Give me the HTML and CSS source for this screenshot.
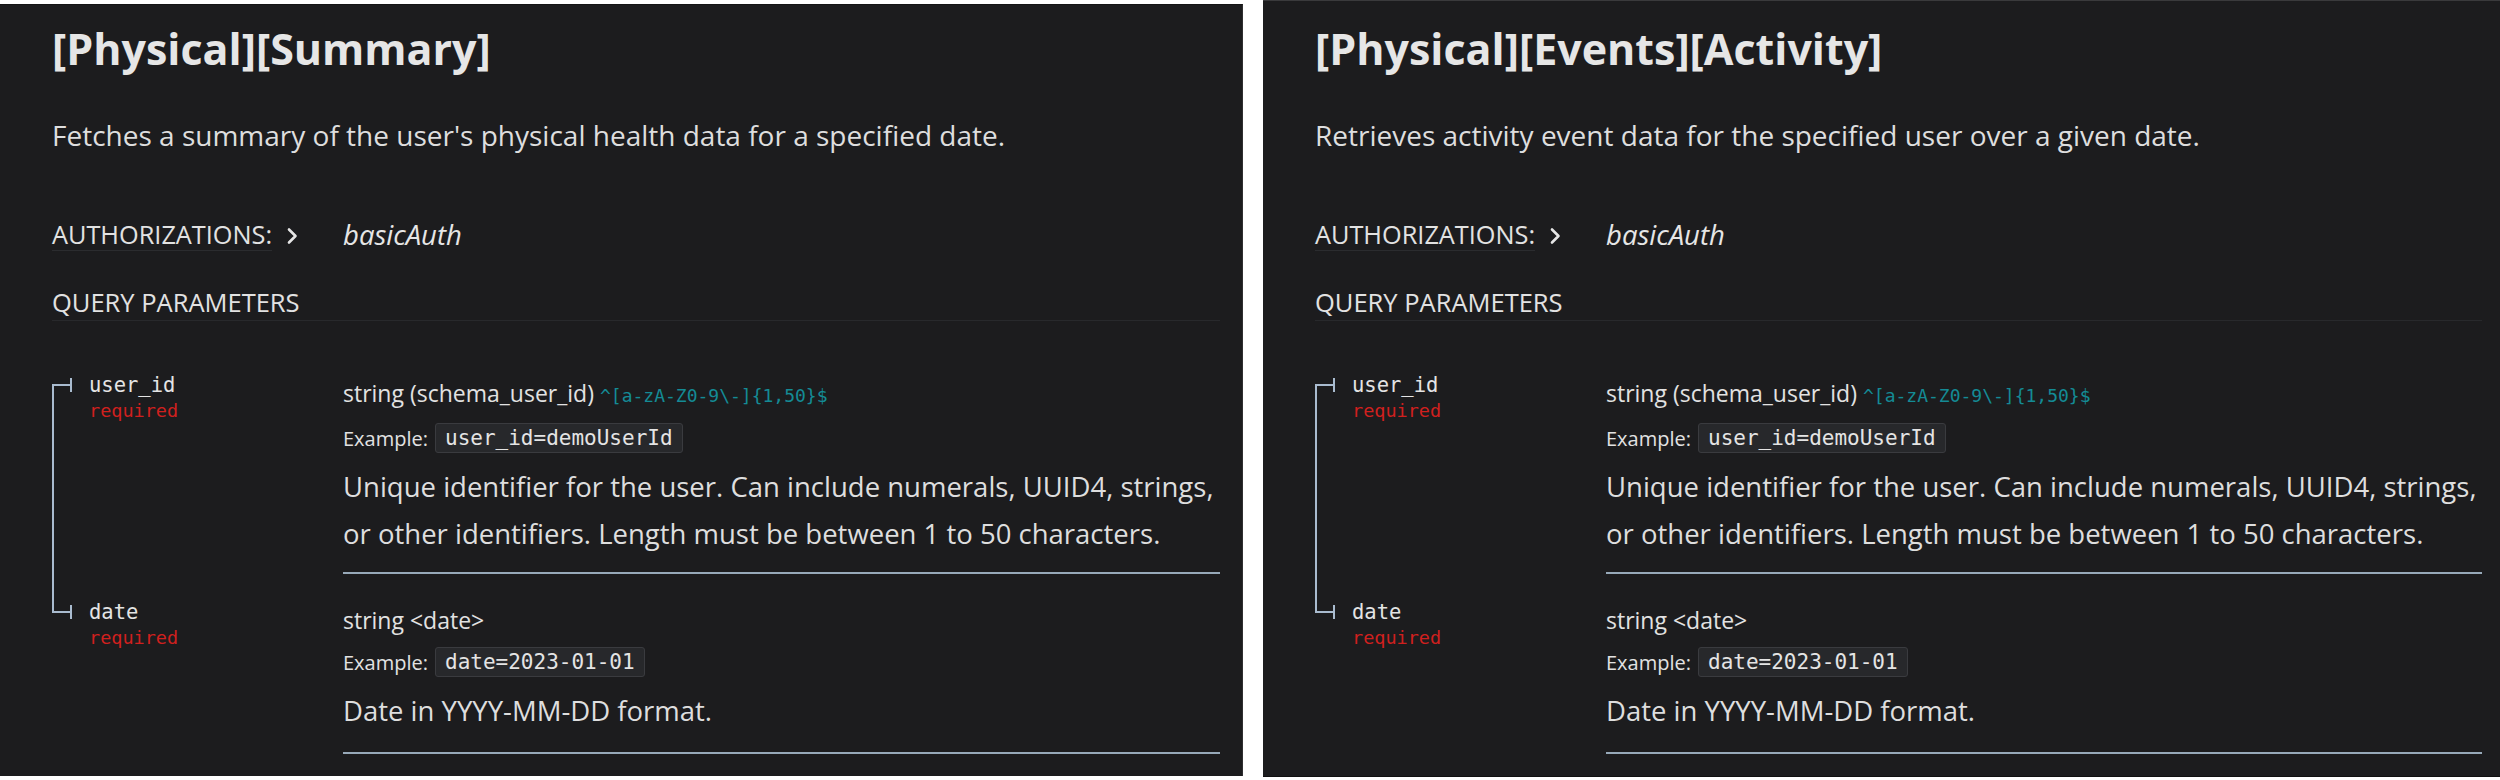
FILE: index.html
```html
<!DOCTYPE html>
<html>
<head>
<meta charset="utf-8">
<link rel="stylesheet" href="styles.css">
</head>
<body>
<div class="page">
  <section class="panel panel-left">
    <h2 class="title">[Physical][Summary]</h2>
    <p class="desc">Fetches a summary of the user's physical health data for a specified date.</p>
    <div class="auth">
      <div class="auth-label"><span class="auth-text">AUTHORIZATIONS:</span>
        <svg class="chev" viewBox="0 0 14 20" width="14" height="20"><path d="M4 3.5 L10.5 10 L4 16.5" fill="none" stroke="#e6e6e6" stroke-width="2.6" stroke-linecap="round" stroke-linejoin="round"/></svg>
      </div>
      <span class="auth-value">basicAuth</span>
    </div>
    <h5 class="qp">QUERY PARAMETERS</h5>
    <div class="params">
      <div class="pname first"><span class="branch"></span><div class="name">user_id</div><div class="req">required</div></div>
      <div class="pdetail">
        <div class="type">string (schema_user_id) <span class="pattern">^[a-zA-Z0-9\-]{1,50}$</span></div>
        <div class="example"><span>Example:</span><code class="code">user_id=demoUserId</code></div>
        <p class="pdesc">Unique identifier for the user. Can include numerals, UUID4, strings, or other identifiers. Length must be between 1 to 50 characters.</p>
      </div>
      <div class="pname last"><span class="branch"></span><div class="name">date</div><div class="req">required</div></div>
      <div class="pdetail pdetail-last">
        <div class="type">string &lt;date&gt;</div>
        <div class="example"><span>Example:</span><code class="code">date=2023-01-01</code></div>
        <p class="pdesc">Date in YYYY-MM-DD format.</p>
      </div>
    </div>
  </section>
  <section class="panel panel-right">
    <h2 class="title">[Physical][Events][Activity]</h2>
    <p class="desc">Retrieves activity event data for the specified user over a given date.</p>
    <div class="auth">
      <div class="auth-label"><span class="auth-text">AUTHORIZATIONS:</span>
        <svg class="chev" viewBox="0 0 14 20" width="14" height="20"><path d="M4 3.5 L10.5 10 L4 16.5" fill="none" stroke="#e6e6e6" stroke-width="2.6" stroke-linecap="round" stroke-linejoin="round"/></svg>
      </div>
      <span class="auth-value">basicAuth</span>
    </div>
    <h5 class="qp">QUERY PARAMETERS</h5>
    <div class="params">
      <div class="pname first"><span class="branch"></span><div class="name">user_id</div><div class="req">required</div></div>
      <div class="pdetail">
        <div class="type">string (schema_user_id) <span class="pattern">^[a-zA-Z0-9\-]{1,50}$</span></div>
        <div class="example"><span>Example:</span><code class="code">user_id=demoUserId</code></div>
        <p class="pdesc">Unique identifier for the user. Can include numerals, UUID4, strings, or other identifiers. Length must be between 1 to 50 characters.</p>
      </div>
      <div class="pname last"><span class="branch"></span><div class="name">date</div><div class="req">required</div></div>
      <div class="pdetail pdetail-last">
        <div class="type">string &lt;date&gt;</div>
        <div class="example"><span>Example:</span><code class="code">date=2023-01-01</code></div>
        <p class="pdesc">Date in YYYY-MM-DD format.</p>
      </div>
    </div>
  </section>
</div>
</body>
</html>
```

FILE: styles.css
```css
html, body {
  margin: 0;
  padding: 0;
  background: #ffffff;
}
.page {
  display: flex;
  gap: 20px;
  width: 2500px;
  height: 780px;
  align-items: flex-start;
}
.panel {
  box-sizing: border-box;
  background: #1c1c1e;
  color: #e2e2e2;
  font-family: "Open Sans", "Noto Sans", sans-serif;
  padding-left: 52px;
  padding-right: 22px;
}
.panel-left {
  width: 1243px;
  height: 772px;
  margin-top: 4px;
  padding-top: 18px;
  border-right: 1px solid #2f2f31;
  border-top: 1px solid #141415;
}
.panel-right {
  width: 1237px;
  height: 777px;
  padding-top: 22px;
  padding-right: 18px;
  border-top: 1px solid #3a3a3c;
  border-bottom: 1px solid #101011;
}
.title {
  margin: 0;
  font-size: 43px;
  line-height: 52px;
  font-weight: 700;
  color: #e6e6e6;
}
.desc {
  margin: 43px 0 0 0;
  font-size: 28px;
  line-height: 34px;
  color: #dedede;
}
.auth {
  display: flex;
  align-items: center;
  margin-top: 66px;
  height: 33px;
}
.auth-label {
  width: 291px;
  display: flex;
  align-items: center;
  gap: 13px;
}
.auth-text {
  font-size: 25.3px;
  line-height: 32px;
  border-bottom: 1px solid #2b2c2f;
}
.chev {
  display: block;
  margin-top: 2px;
}
.auth-value {
  font-style: italic;
  font-size: 27.5px;
  line-height: 32px;
  color: #e6e6e6;
}
.qp {
  margin: 35px 0 0 0;
  font-size: 25.5px;
  line-height: 32px;
  font-weight: 400;
  padding-bottom: 2px;
  border-bottom: 1px solid #28292c;
}
.params {
  display: grid;
  grid-template-columns: 291px 1fr;
  margin-top: 26px;
}
.pname {
  position: relative;
  padding: 25px 0 0 37px;
  font-family: "DejaVu Sans Mono", "Liberation Mono", monospace;
}
.pname::before {
  content: "";
  position: absolute;
  left: 0;
  width: 2px;
  background: #a9bbcf;
}
.pname.first::before {
  top: 37px;
  bottom: -2px;
}
.pname.last::before {
  top: 0;
  height: 39px;
}
.branch {
  position: absolute;
  left: 0;
  top: 31px;
  width: 18px;
  height: 14px;
  border-right: 2px solid #a9bbcf;
  background: linear-gradient(#a9bbcf, #a9bbcf) no-repeat 0 6px / 100% 2px;
}
.name {
  font-size: 20.5px;
  line-height: 26px;
  color: #e4e4e4;
}
.req {
  font-size: 18.5px;
  line-height: 26px;
  color: #d0201e;
}
.pdetail {
  padding: 31px 0 15px 0;
  border-bottom: 2px solid #97a9b9;
}
.pdetail-last {
  padding-bottom: 18px;
}
.type {
  font-size: 23px;
  line-height: 30px;
  color: #e2e2e2;
}
.pattern {
  font-family: "DejaVu Sans Mono", "Liberation Mono", monospace;
  font-size: 18px;
  color: #148b95;
}
.example {
  display: flex;
  align-items: center;
  gap: 7px;
  margin-top: 10px;
  height: 34px;
  font-size: 20px;
}
.code {
  font-family: "DejaVu Sans Mono", "Liberation Mono", monospace;
  font-size: 21px;
  line-height: 28px;
  padding: 0 9px;
  background: #27282b;
  border: 1px solid #3a3b3f;
  border-radius: 3px;
  color: #e4e4e4;
}
.pdesc {
  margin: 8px 0 0 0;
  font-size: 27.5px;
  line-height: 47px;
  color: #dedede;
}
```
